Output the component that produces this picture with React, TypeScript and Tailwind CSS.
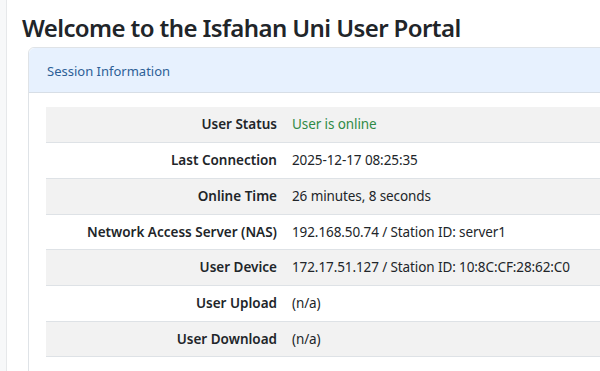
import React from "react"

interface InfoRow {
  label: string
  value: string
  tone?: "success"
}

const rows: InfoRow[] = [
  { label: "User Status", value: "User is online", tone: "success" },
  { label: "Last Connection", value: "2025-12-17 08:25:35" },
  { label: "Online Time", value: "26 minutes, 8 seconds" },
  { label: "Network Access Server (NAS)", value: "192.168.50.74 / Station ID: server1" },
  { label: "User Device", value: "172.17.51.127 / Station ID: 10:8C:CF:28:62:C0" },
  { label: "User Upload", value: "(n/a)" },
  { label: "User Download", value: "(n/a)" },
]

export default function App() {
  return (
    <div className="flex h-[371px] w-[600px] overflow-hidden bg-white font-['Noto_Sans',sans-serif] text-[#212529]">
      {/* sidebar edge */}
      <div className="w-[7px] shrink-0 border-r border-[#e6e8ea] bg-[#f7f8f9]" />

      <div className="min-w-0 flex-1 pl-[15px] pt-[14px]">
        <h1 className="mb-[6px] whitespace-nowrap text-[24px] font-semibold leading-[27px] tracking-[-0.6px]">
          Welcome to the Isfahan Uni User Portal
        </h1>

        <div className="ml-[6px] w-[620px] rounded-tl-[6px] border border-[#dfe3e7]">
          <div className="flex h-[45px] items-center rounded-tl-[6px] border-b border-[#d7dee6] bg-[#e7f1fe] px-[18px] pt-[3px] text-[13px] text-[#2d5f97]">
            Session Information
          </div>

          <div className="pl-[17px] pt-[14px] pb-[20px]">
            <table className="w-full border-collapse text-[13.5px]">
              <tbody>
                {rows.map((row, i) => (
                  <tr
                    key={row.label}
                    className={`h-[35.7px] border-b border-[#dee2e6] ${i % 2 === 0 ? "bg-[#f2f2f2]" : "bg-white"}`}
                  >
                    <th className="w-[239px] whitespace-nowrap pr-[8px] text-right font-semibold">
                      {row.label}
                    </th>
                    <td
                      className={`whitespace-nowrap pl-[7px] tracking-[-0.1px] ${row.tone === "success" ? "text-[#2f8a46]" : ""}`}
                    >
                      {row.value}
                    </td>
                  </tr>
                ))}
              </tbody>
            </table>
          </div>
        </div>
      </div>
    </div>
  )
}
